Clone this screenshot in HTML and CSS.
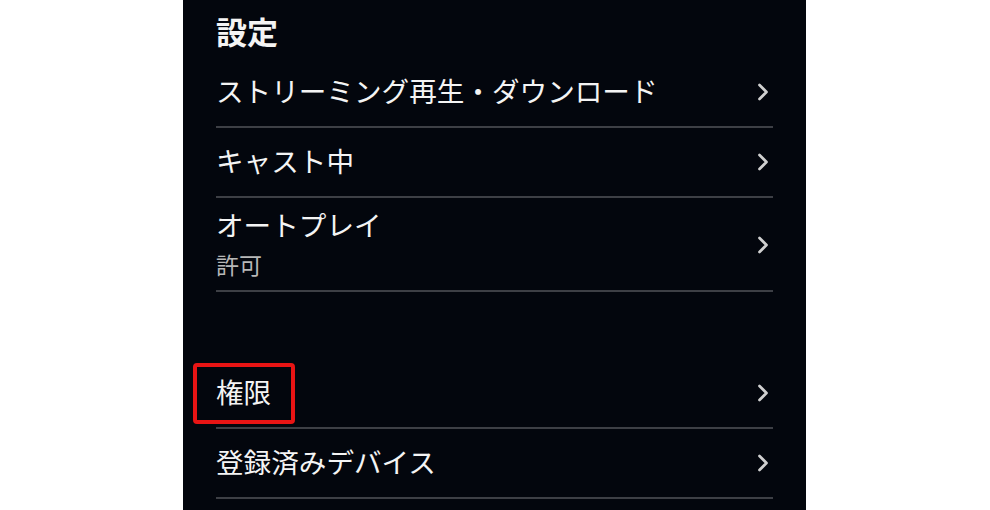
FILE: index.html
```html
<!DOCTYPE html>
<html lang="ja">
<head>
  <meta charset="UTF-8">
  <title>設定</title>
  <link rel="stylesheet" href="styles.css">
</head>
<body>
  <div class="settings">
    <h2 class="settings-title">設定</h2>

    <div class="row">
      <span class="row-label">ストリーミング再生・ダウンロード</span>
      <svg class="chevron" viewBox="0 0 12 18"><path d="M2.5 2 L9.5 9 L2.5 16"/></svg>
    </div>

    <div class="row">
      <span class="row-label">キャスト中</span>
      <svg class="chevron" viewBox="0 0 12 18"><path d="M2.5 2 L9.5 9 L2.5 16"/></svg>
    </div>

    <div class="row row-tall">
      <div class="row-text">
        <span class="row-label">オートプレイ</span>
        <span class="row-sub">許可</span>
      </div>
      <svg class="chevron" viewBox="0 0 12 18"><path d="M2.5 2 L9.5 9 L2.5 16"/></svg>
    </div>

    <div class="spacer"></div>

    <div class="row">
      <span class="row-label marked">権限</span>
      <svg class="chevron" viewBox="0 0 12 18"><path d="M2.5 2 L9.5 9 L2.5 16"/></svg>
    </div>

    <div class="row">
      <span class="row-label">登録済みデバイス</span>
      <svg class="chevron" viewBox="0 0 12 18"><path d="M2.5 2 L9.5 9 L2.5 16"/></svg>
    </div>
  </div>
</body>
</html>
```

FILE: styles.css
```css
body {
  margin: 0;
  background: #ffffff;
  display: flex;
  justify-content: center;
  height: 510px;
  overflow: hidden;
  font-family: "Noto Sans CJK JP", "Noto Sans", sans-serif;
}
.settings {
  box-sizing: border-box;
  width: 623px;
  height: 510px;
  margin-left: -1px;
  padding: 0 33px;
  background: #03060d;
  color: #f4f4f4;
}
.settings-title {
  margin: 0;
  padding-top: 4px;
  height: 54px;
  line-height: 54px;
  font-size: 31px;
  font-weight: 700;
}
.row {
  display: flex;
  align-items: center;
  justify-content: space-between;
  height: 68px;
  border-bottom: 2px solid #3d3f45;
}
.row-tall {
  height: auto;
  padding: 10px 0 9px;
}
.row-text {
  display: flex;
  flex-direction: column;
  gap: 4px;
}
.row-label {
  font-size: 27.6px;
  line-height: 36px;
  position: relative;
  top: -2px;
}
.row-sub {
  font-size: 23px;
  line-height: 33px;
  color: #b8b8b8;
}
.marked {
  display: inline-block;
  line-height: 40px;
}
/* red callout round one entry */
.marked::after {
  content: "";
  position: absolute;
  top: -8px;
  bottom: -13px;
  left: -23px;
  right: -24px;
  border: 4px solid #e81414;
  border-radius: 4px;
}
.chevron {
  width: 12px;
  height: 18px;
  margin-right: 4px;
  fill: none;
  stroke: #d0d0d0;
  stroke-width: 2.7;
  stroke-linecap: round;
  stroke-linejoin: round;
}
.spacer {
  height: 67px;
}
```
